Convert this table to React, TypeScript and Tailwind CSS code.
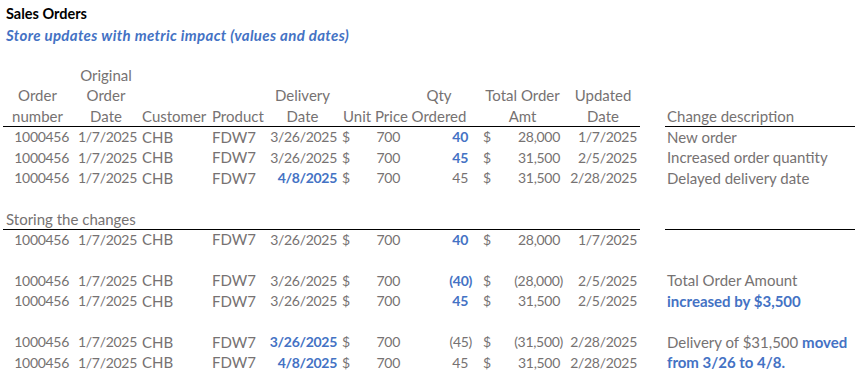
import React from "react"

const FONT = { fontFamily: "Lato, 'Liberation Sans', sans-serif" }

type Row = {
  date: string
  dateBlue?: boolean
  qty: string
  qtyBlue?: boolean
  amt: string
  upd: string
  desc?: React.ReactNode
}

const blue = "font-bold text-[#4472c4]"
// numbers: Calibri digits are narrow, so shrink Lato a little
const num = "text-[14px] tracking-[-0.3px]"

const changes: Row[] = [
  { date: "3/26/2025", qty: "40", qtyBlue: true, amt: "28,000", upd: "1/7/2025", desc: "New order" },
  { date: "3/26/2025", qty: "45", qtyBlue: true, amt: "31,500", upd: "2/5/2025", desc: "Increased order quantity" },
  { date: "4/8/2025", dateBlue: true, qty: "45", amt: "31,500", upd: "2/28/2025", desc: "Delayed delivery date" },
]

const stored: (Row | null)[] = [
  { date: "3/26/2025", qty: "40", qtyBlue: true, amt: "28,000", upd: "1/7/2025" },
  null,
  { date: "3/26/2025", qty: "(40)", qtyBlue: true, amt: "(28,000)", upd: "2/5/2025", desc: "Total Order Amount" },
  {
    date: "3/26/2025",
    qty: "45",
    qtyBlue: true,
    amt: "31,500",
    upd: "2/5/2025",
    desc: <span className={blue}>increased by $3,500</span>,
  },
  null,
  {
    date: "3/26/2025",
    dateBlue: true,
    qty: "(45)",
    amt: "(31,500)",
    upd: "2/28/2025",
    desc: (
      <>
        Delivery of $31,500 <span className={blue}>moved</span>
      </>
    ),
  },
  {
    date: "4/8/2025",
    dateBlue: true,
    qty: "45",
    amt: "31,500",
    upd: "2/28/2025",
    desc: <span className={blue}>from 3/26 to 4/8.</span>,
  },
]

function DataRow({ r }: { r: Row }) {
  const qtyParen = r.qty.startsWith("(")
  const amtParen = r.amt.startsWith("(")
  return (
    <div className="flex h-[20.5px] items-center leading-none">
      <div className={`w-[69px] pr-[3px] text-right ${num}`}>1000456</div>
      <div className={`w-[68px] pr-[3px] text-right ${num}`}>1/7/2025</div>
      <div className="w-[69px] pl-[2px]">CHB</div>
      <div className="w-[56px] pl-[3px]">FDW7</div>
      <div className={`w-[75px] pr-[3px] text-right ${num} ${r.dateBlue ? blue : ""}`}>{r.date}</div>
      <div className={`flex w-[63px] justify-between pl-[2px] pr-[3px] ${num}`}>
        <span>$</span>
        <span>700</span>
      </div>
      <div className={`w-[72px] text-right ${num} ${qtyParen ? "pr-[3px]" : "pr-[7px]"} ${r.qtyBlue ? blue : ""}`}>
        {r.qty}
      </div>
      <div className={`flex w-[91px] justify-between pl-[8px] ${num} ${amtParen ? "pr-[3px]" : "pr-[6px]"}`}>
        <span>$</span>
        <span>{r.amt}</span>
      </div>
      <div className={`w-[74px] pr-[3px] text-right ${num}`}>{r.upd}</div>
      <div className="w-[25px]" />
      <div className="w-[190px] whitespace-nowrap pl-[2px]">{r.desc}</div>
    </div>
  )
}

export default function App() {
  return (
    <div className="min-h-screen bg-white pt-[4px] text-[15px] text-[#767272]" style={FONT}>
      <div className="flex h-[20.5px] items-center pl-[6px] text-[14.5px] font-bold text-black">Sales Orders</div>
      <div className="flex h-[20.5px] items-center pl-[6px] font-bold italic tracking-[0.35px] text-[#4472c4]">
        Store updates with metric impact (values and dates)
      </div>
      <div className="h-[20.5px]" />

      <div className="ml-[3px]">
        {/* header */}
        <div className="flex h-[61.5px] items-end leading-[20.5px]">
          <div className="flex h-full w-[637px] items-end border-b border-black">
            <div className="w-[69px] text-center">
              Order
              <br />
              number
            </div>
            <div className="w-[68px] text-center">
              Original
              <br />
              Order
              <br />
              Date
            </div>
            <div className="w-[69px] pl-[2px]">Customer</div>
            <div className="w-[56px] pl-[3px]">Product</div>
            <div className="w-[75px] text-center">
              Delivery
              <br />
              Date
            </div>
            <div className="w-[63px] whitespace-nowrap pl-[3px]">Unit Price</div>
            <div className="w-[72px] text-center">
              Qty
              <br />
              Ordered
            </div>
            <div className="w-[91px] pl-[4px] text-center">
              Total Order
              <br />
              Amt
            </div>
            <div className="w-[74px] text-center">
              Updated
              <br />
              Date
            </div>
          </div>
          <div className="w-[25px]" />
          <div className="flex h-full w-[190px] items-end border-b border-black pl-[2px]">Change description</div>
        </div>

        {changes.map((r, i) => (
          <DataRow key={i} r={r} />
        ))}

        <div className="h-[20.5px]" />

        <div className="flex h-[20.5px]">
          <div className="flex w-[637px] items-center border-b border-black pl-[3px]">Storing the changes</div>
          <div className="w-[25px]" />
          <div className="w-[190px] border-b border-black" />
        </div>

        {stored.map((r, i) => (r ? <DataRow key={i} r={r} /> : <div key={i} className="h-[20.5px]" />))}
      </div>
    </div>
  )
}
